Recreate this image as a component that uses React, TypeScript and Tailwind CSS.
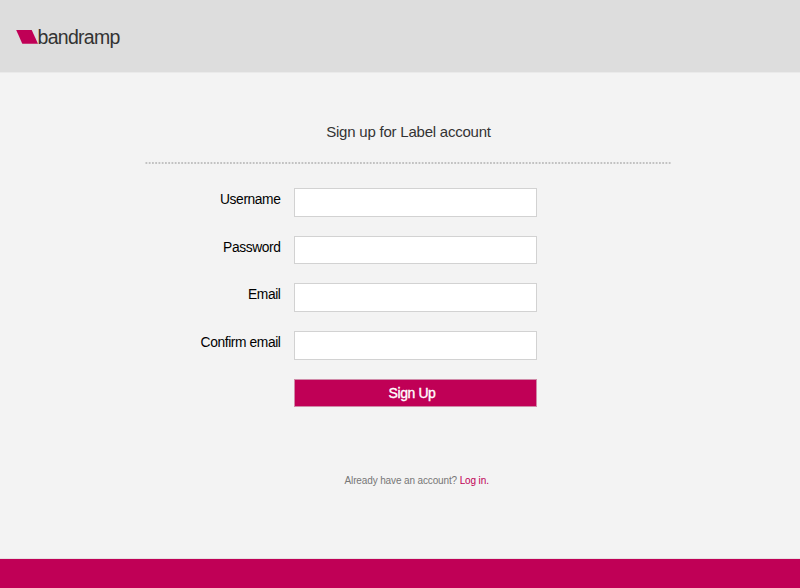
const fields = [
  { label: "Username", type: "text" },
  { label: "Password", type: "password" },
  { label: "Email", type: "email" },
  { label: "Confirm email", type: "email" },
];

function Logo() {
  return (
    <a className="flex items-start" aria-label="bandramp">
      <svg width="22" height="15" viewBox="0 0 22 15" className="mt-[30px]">
        <path d="M0.2 0H15.7L22 13.8H6.3Z" fill="#c00056" />
      </svg>
      <span className="-ml-[0.5px] mt-[26px] text-[19.5px] leading-[22px] tracking-[-0.7px] text-[#333]">bandramp</span>
    </a>
  );
}

function DottedRule() {
  return (
    <svg className="mt-[21px] block h-[2px] w-full" viewBox="0 0 527 2" aria-hidden="true">
      <path d="M0.5 1H527" stroke="#c2c2c2" strokeWidth="1.8" strokeDasharray="1.8 1.45" fill="none" />
    </svg>
  );
}

export default function App() {
  return (
    <div className="flex h-[588px] w-full flex-col bg-[#f3f3f3] font-['Liberation_Sans',Arial,sans-serif] text-black">
      <header className="flex h-[73px] shrink-0 border-b border-[#eaeaea] bg-[#dddddd] pl-4">
        <Logo />
      </header>
      <main className="ml-[145px] w-[527px] grow">
        <h1 className="mt-[50px] text-center text-[15px] leading-[18px] tracking-[-0.22px] text-[#333]">Sign up for Label account</h1>
        <DottedRule />
        <form className="mt-6 flex flex-col">
          {fields.map((f) => (
            <label key={f.label} className="mb-[19px] flex h-[28.7px]">
              <span className="mr-[13.5px] w-[135.5px] pt-[3.9px] text-right text-[13.8px] leading-[16px] tracking-[-0.4px]">{f.label}</span>
              <input type={f.type} className="h-[28.5px] w-[243px] border border-[#d2d2d2] bg-white px-2" />
            </label>
          ))}
          <button type="button" className="ml-[149px] h-[28px] w-[243px] border border-[#d08aa8] bg-[#c00056] pr-[7px] text-[14px] leading-[26px] tracking-[-0.4px] text-white [-webkit-text-stroke:0.35px_white]">Sign Up</button>
        </form>
        <p className="ml-[199.5px] mt-[67px] text-[10px] leading-[14px] tracking-[-0.13px] text-[#777]">
          Already have an account? <a className="text-[#c00056]">Log in.</a>
        </p>
      </main>
      <footer className="h-[30px] shrink-0 border-t border-[#e6dfe2] bg-[#c00056]" />
    </div>
  );
}
